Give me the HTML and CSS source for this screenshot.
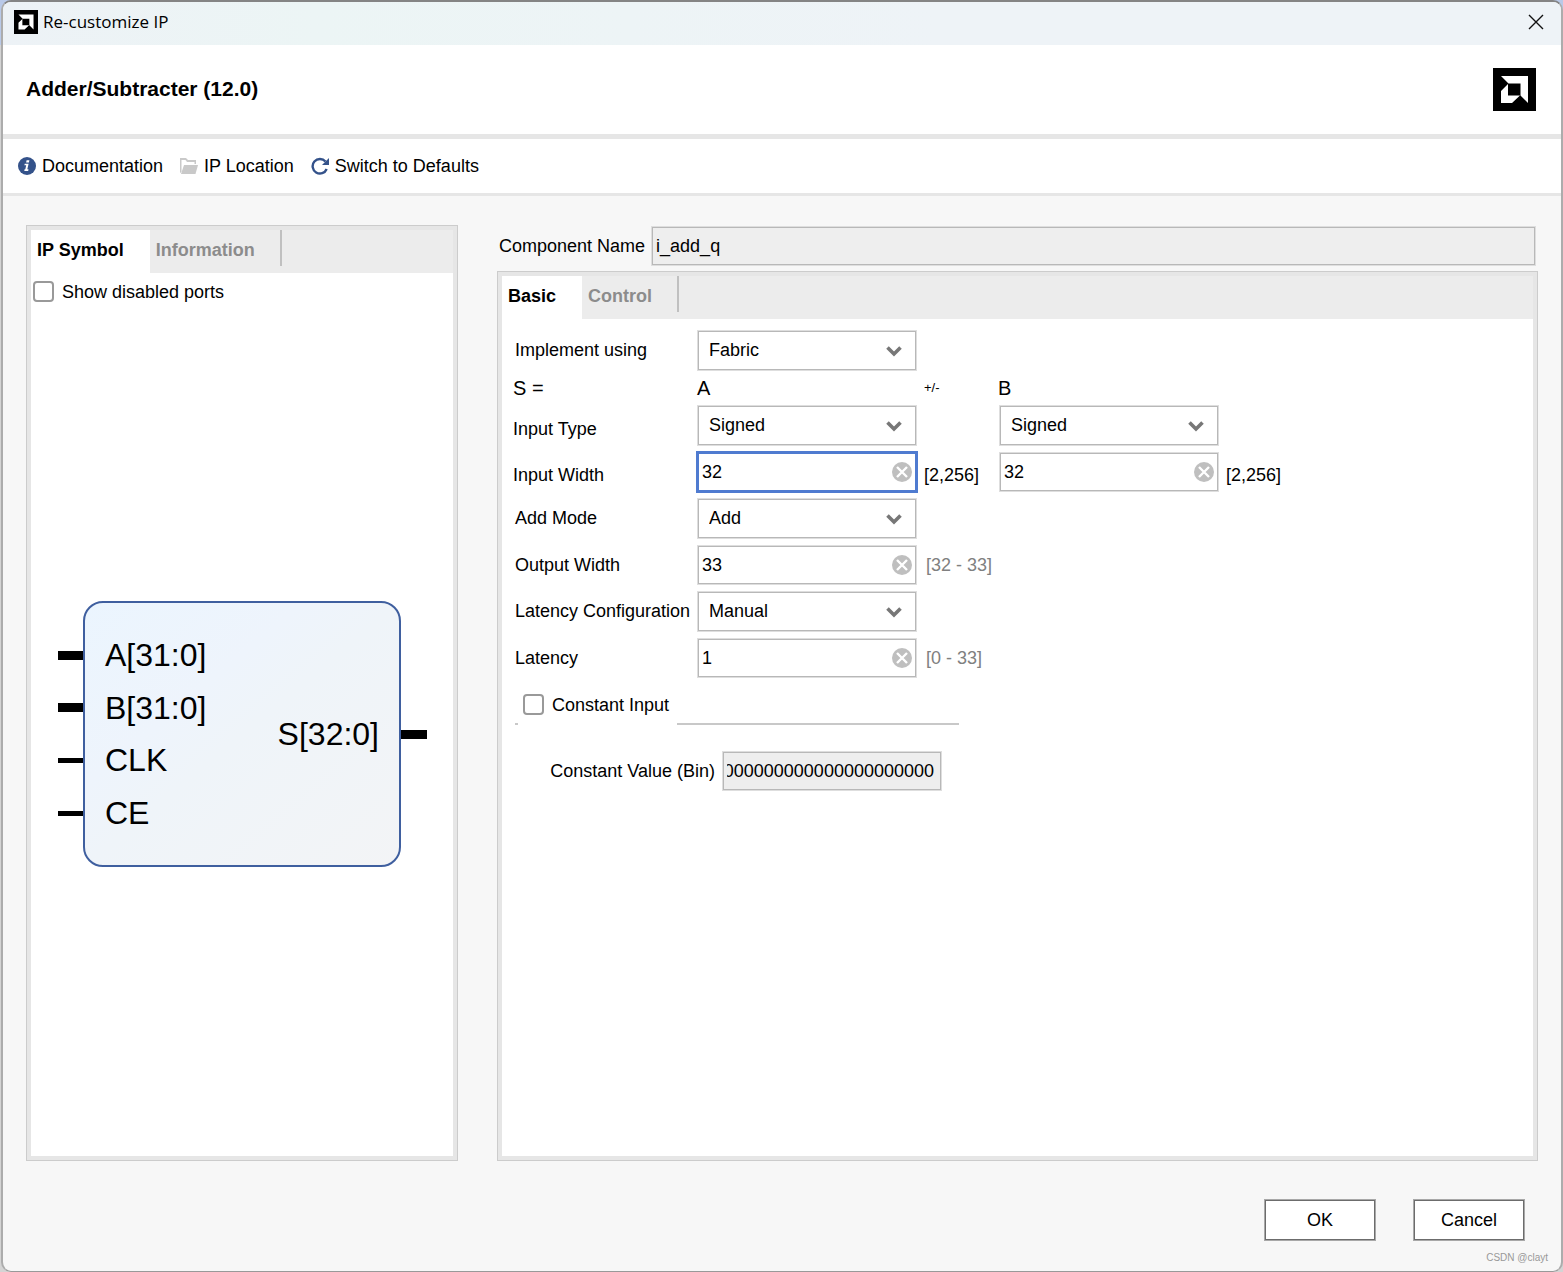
FILE: index.html
```html
<!DOCTYPE html>
<html lang="en">
<head>
    <meta charset="UTF-8">
    <meta name="viewport" content="width=device-width, initial-scale=1.0">
    <title>Re-customize IP</title>
    <link rel="stylesheet" href="styles.css">
</head>
<body>
<!-- shared icons -->
<svg class="sprite" aria-hidden="true">
    <symbol id="logo" viewBox="0 0 43 43">
        <rect width="43" height="43" fill="#000"/>
        <path fill="#fff" d="M8 8H35V35L27.5 27.5V15.5H15.5ZM15 16V27.5H27L19 35H8V23Z"/>
    </symbol>
    <symbol id="chevron" viewBox="0 0 16 11">
        <path d="M1.5 1.5L8 8L14.5 1.5" fill="none" stroke="#777" stroke-width="3.6"/>
    </symbol>
    <symbol id="clear" viewBox="0 0 20 20">
        <circle cx="10" cy="10" r="10" fill="#bfbfbf"/>
        <path d="M5 5L15 15M15 5L5 15" fill="none" stroke="#fff" stroke-width="2.4"/>
    </symbol>
</svg>

<div class="window">
    <div class="titlebar">
        <svg class="app-icon"><use href="#logo"/></svg>
        <span class="titlebar-text">Re-customize IP</span>
        <button class="close" type="button" aria-label="Close">
            <svg width="16" height="16" viewBox="0 0 16 16"><path d="M1 1L15 15M15 1L1 15" stroke="#111" stroke-width="1.4"/></svg>
        </button>
    </div>

    <div class="header">
        <h1>Adder/Subtracter (12.0)</h1>
        <svg class="brand"><use href="#logo"/></svg>
    </div>

    <div class="toolbar">
        <button type="button">
            <svg width="18" height="18" viewBox="0 0 18 18">
                <circle cx="9" cy="9" r="9" fill="#34528a"/>
                <path fill="#fff" d="M8.6 3.2h2.8l-.5 2.3H8.1zM6.7 6.7h3.9l-1.3 5.6h1.2l-.3 1.6H6.3l.3-1.6h.7l.9-4H6.4z"/>
            </svg>
            Documentation
        </button>
        <button type="button">
            <svg width="18" height="18" viewBox="0 0 18 18">
                <path fill="#c9c9c9" d="M0 1h6l2 2h8v4h-1.500V5H7L5.500 3H1.500V15L0 16z"/>
                <path fill="#c9c9c9" d="M4 8h14l-2.500 9H1z"/>
            </svg>
            IP Location
        </button>
        <button type="button">
            <svg width="18" height="18" viewBox="0 0 18 18">
                <path d="M14.500 4.500A7.300 7.300 0 1 0 15.700 12" fill="none" stroke="#34528a" stroke-width="2.400"/>
                <path d="M18 1V8H11Z" fill="#34528a"/>
            </svg>
            Switch to Defaults
        </button>
    </div>

    <div class="main">
        <div class="panel symbol-panel">
            <div class="tabs">
                <button class="tab active" type="button">IP Symbol</button>
                <button class="tab" type="button">Information</button>
            </div>
            <label class="check show-ports"><input type="checkbox">Show disabled ports</label>
            <div class="symbol-area">
                <svg class="ip-symbol" width="370" height="266" viewBox="0 0 370 266">
                    <defs>
                        <linearGradient id="block" x1="0" y1="0" x2="1" y2="1">
                            <stop offset="0" stop-color="#ebf5fe"/>
                            <stop offset="0.35" stop-color="#eef4fc"/>
                            <stop offset="0.5" stop-color="#eff4f9"/>
                            <stop offset="1" stop-color="#f3f4f6"/>
                        </linearGradient>
                    </defs>
                    <rect x="26" y="1" width="316" height="264" rx="19" fill="url(#block)" stroke="#3f5f9f" stroke-width="2"/>
                    <path d="M0 54.500H25M0 106.500H25M343 133.500H369" stroke="#000" stroke-width="9"/>
                    <path d="M0 159.500H25M0 212.500H25" stroke="#000" stroke-width="5"/>
                    <text x="47" y="65">A[31:0]</text>
                    <text x="47" y="118">B[31:0]</text>
                    <text x="47" y="170">CLK</text>
                    <text x="47" y="223">CE</text>
                    <text x="321" y="144" text-anchor="end">S[32:0]</text>
                </svg>
            </div>
        </div>

        <div class="config">
            <div class="component">
                <label for="component-name">Component Name</label>
                <input class="field" id="component-name" type="text" value="i_add_q" readonly>
            </div>
            <div class="panel">
                <div class="tabs">
                    <button class="tab active" type="button">Basic</button>
                    <button class="tab" type="button">Control</button>
                </div>
                <div class="form">
                    <div class="row">
                        <label class="name" for="implement">Implement using</label>
                        <div class="control">
                            <select class="field" id="implement"><option>Fabric</option><option>DSP48</option></select>
                            <svg class="chevron"><use href="#chevron"/></svg>
                        </div>
                    </div>
                    <div class="row operands">
                        <span class="name">S =</span>
                        <span class="operand">A</span>
                        <span class="sign">+/-</span>
                        <span>B</span>
                    </div>
                    <div class="row ports">
                        <label class="name" for="type-a">Input Type</label>
                        <div class="control">
                            <select class="field" id="type-a"><option>Signed</option><option>Unsigned</option></select>
                            <svg class="chevron"><use href="#chevron"/></svg>
                        </div>
                        <span class="hint"></span>
                        <div class="control">
                            <select class="field" id="type-b" aria-label="Input Type B"><option>Signed</option><option>Unsigned</option></select>
                            <svg class="chevron"><use href="#chevron"/></svg>
                        </div>
                    </div>
                    <div class="row ports">
                        <label class="name" for="width-a">Input Width</label>
                        <div class="control">
                            <input class="field focused" id="width-a" type="text" value="32">
                            <button class="clear" type="button" aria-label="Clear"><svg><use href="#clear"/></svg></button>
                        </div>
                        <span class="hint">[2,256]</span>
                        <div class="control">
                            <input class="field" id="width-b" type="text" value="32" aria-label="Input Width B">
                            <button class="clear" type="button" aria-label="Clear"><svg><use href="#clear"/></svg></button>
                        </div>
                        <span class="hint">[2,256]</span>
                    </div>
                    <div class="row">
                        <label class="name" for="mode">Add Mode</label>
                        <div class="control">
                            <select class="field" id="mode"><option>Add</option><option>Subtract</option></select>
                            <svg class="chevron"><use href="#chevron"/></svg>
                        </div>
                    </div>
                    <div class="row">
                        <label class="name" for="out-width">Output Width</label>
                        <div class="control">
                            <input class="field" id="out-width" type="text" value="33">
                            <button class="clear" type="button" aria-label="Clear"><svg><use href="#clear"/></svg></button>
                        </div>
                        <span class="range">[32 - 33]</span>
                    </div>
                    <div class="row">
                        <label class="name" for="latency-conf">Latency Configuration</label>
                        <div class="control">
                            <select class="field" id="latency-conf"><option>Manual</option><option>Automatic</option></select>
                            <svg class="chevron"><use href="#chevron"/></svg>
                        </div>
                    </div>
                    <div class="row">
                        <label class="name" for="latency">Latency</label>
                        <div class="control">
                            <input class="field" id="latency" type="text" value="1">
                            <button class="clear" type="button" aria-label="Clear"><svg><use href="#clear"/></svg></button>
                        </div>
                        <span class="range">[0 - 33]</span>
                    </div>

                    <div class="constant">
                        <div class="constant-title">
                            <label class="check"><input type="checkbox">Constant Input</label>
                        </div>
                        <div class="constant-value">
                            <label for="constant">Constant Value (Bin)</label>
                            <div class="control">
                                <input class="field" id="constant" type="text" dir="rtl" value="00000000000000000000000000000000" readonly>
                            </div>
                        </div>
                    </div>
                </div>
            </div>
        </div>
    </div>

    <div class="footer">
        <div class="actions">
            <button type="button">OK</button>
            <button type="button">Cancel</button>
        </div>
        <span class="credit">CSDN @clayt</span>
    </div>
</div>
</body>
</html>
```

FILE: styles.css
```css
* {
    box-sizing: border-box;
}

body {
    margin: 0;
    padding: 0 0 0 1px;
    min-height: 100vh;
    display: flex;
    background: linear-gradient(#b9c9e8 45px, #d4d4d4 45px);
    font-family: "Liberation Sans", Arial, sans-serif;
    font-size: 18px;
    line-height: 20px;
    color: #000;
}

button, input, select {
    font: inherit;
    color: inherit;
    margin: 0;
}

button {
    padding: 0;
    border: none;
    background: none;
    cursor: pointer;
}

.sprite {
    position: absolute;
    width: 0;
    height: 0;
}

.window {
    flex: 1;
    display: flex;
    flex-direction: column;
    border: 2px solid #acacac;
    border-top-color: #848484;
    border-bottom: 1px solid #999;
    border-radius: 10px;
    background: #f7f7f7;
    overflow: hidden;
}

/* title bar */
.titlebar {
    display: flex;
    align-items: center;
    height: 43px;
    padding: 0 17px 3px 11px;
    background: linear-gradient(90deg, #edf2f6, #ecf5f5 20%, #eef3f7 60%);
}

.app-icon {
    width: 24px;
    height: 24px;
    margin-right: 5px;
}

.titlebar-text {
    flex: 1;
    font-family: "Open Sans", "Segoe UI", sans-serif;
    font-size: 17px;
}

.close svg {
    display: block;
}

/* header */
.header {
    display: flex;
    align-items: center;
    justify-content: space-between;
    height: 94px;
    padding: 0 25px 0 23px;
    background: #fff;
    border-bottom: 5px solid #e6e6e6;
}

.header h1 {
    margin: 0 0 2px;
    font-size: 21px;
}

.brand {
    width: 43px;
    height: 43px;
}

/* toolbar */
.toolbar {
    display: flex;
    gap: 17px;
    height: 57px;
    padding: 0 15px;
    background: #fff;
    border-bottom: 3px solid #e6e6e6;
}

.toolbar button {
    display: flex;
    align-items: center;
    gap: 6px;
}

/* panels */
.main {
    flex: 1;
    display: flex;
    gap: 39px;
    padding: 29px 23px 0;
}

.panel {
    flex: 1;
    display: flex;
    flex-direction: column;
    border: 1px solid #ccc;
    background: #fff;
    box-shadow: inset 0 0 0 4px #e6e6e6;
    padding: 4px;
}

.symbol-panel {
    flex: none;
    width: 432px;
}

.tabs {
    display: flex;
    align-items: flex-start;
    height: 43px;
    background: #ececec;
}

.tab {
    height: 36px;
    padding: 4px 25px 0 6px;
    border-right: 2px solid #c0c0c0;
    font-weight: bold;
    color: #8c8c8c;
}

.tab.active {
    height: 43px;
    padding: 0 26px 3px 6px;
    border-right: none;
    background: #fff;
    color: #000;
}

.check {
    display: flex;
    align-items: center;
    gap: 8px;
}

.check input {
    appearance: none;
    width: 21px;
    height: 21px;
    border: 2px solid #999;
    border-radius: 4px;
    background: #fff;
}

.show-ports {
    height: 39px;
    padding: 0 0 2px 2px;
}

.symbol-area {
    flex: 1;
    display: flex;
    align-items: center;
    justify-content: center;
    padding-left: 2px;
}

.ip-symbol text {
    font-size: 32px;
}

/* component config */
.config {
    flex: 1;
    display: flex;
    flex-direction: column;
}

.component {
    display: flex;
    align-items: center;
    gap: 6px;
    padding: 1px 2px 5px;
}

.component .field {
    flex: 1;
}

.field {
    display: block;
    width: 100%;
    height: 40px;
    padding: 0 4px;
    border: 1px solid #dedede;
    border-radius: 0;
    background: #fff;
    box-shadow: inset 0 0 0 1px #b8b8b8;
    outline: none;
}

.field[readonly] {
    background: #eee;
}

.field.focused {
    border-color: #4f7bd0;
    box-shadow: inset 0 0 0 1px #4f7bd0, 0 0 0 1px #4f7bd0;
}

select.field {
    height: 41px;
    padding: 0 11px 2px;
    appearance: none;
}

.form {
    display: flex;
    flex-direction: column;
    gap: 6px;
    padding: 11px 13px;
}

.row {
    display: flex;
    align-items: center;
}

.name {
    width: 182px;
    padding-bottom: 1px;
}

.control {
    position: relative;
    width: 220px;
}

.chevron {
    position: absolute;
    right: 15px;
    top: 16px;
    width: 16px;
    height: 11px;
    pointer-events: none;
}

.clear {
    position: absolute;
    right: 5px;
    top: 10px;
}

.clear svg {
    display: block;
    width: 20px;
    height: 20px;
}

.operands,
.ports {
    margin-left: -2px;
}

.operands {
    height: 22px;
    font-size: 20px;
}

.operands .name,
.ports .name {
    width: 184px;
}

.operand {
    width: 227px;
    padding-bottom: 1px;
}

.sign {
    width: 74px;
    font-size: 13px;
}

.ports .name,
.hint {
    padding: 6px 0 0;
}

.hint {
    width: 82px;
    padding-left: 7px;
}

.range {
    padding: 0 0 1px 9px;
    color: #808080;
}

/* constant input group */
.constant {
    width: 444px;
    margin-top: 10px;
}

.constant-title {
    display: flex;
    align-items: flex-end;
}

.constant-title::before,
.constant-title::after {
    content: "";
    width: 3px;
    height: 2px;
    background: #c8c8c8;
}

.constant-title::after {
    flex: 1;
}

.constant-title .check {
    padding: 0 8px 10px 5px;
}

.constant-value {
    display: flex;
    align-items: center;
    justify-content: flex-end;
    gap: 7px;
    padding: 26px 17px 0 0;
}

.constant-value .field {
    padding-right: 7px;
    text-align: right;
}

/* footer */
.footer {
    display: flex;
    flex-direction: column;
    padding: 38px 13px 7px;
}

.actions {
    display: flex;
    justify-content: flex-end;
    gap: 37px;
    padding-right: 23px;
}

.actions button {
    width: 112px;
    height: 42px;
    border: 1px solid #a8a8a8;
    background: #fff;
    box-shadow: inset 0 0 0 1px #6c6c6c;
}

.credit {
    align-self: flex-end;
    margin-top: 10px;
    font-size: 10px;
    line-height: 13px;
    color: #999;
}
```
